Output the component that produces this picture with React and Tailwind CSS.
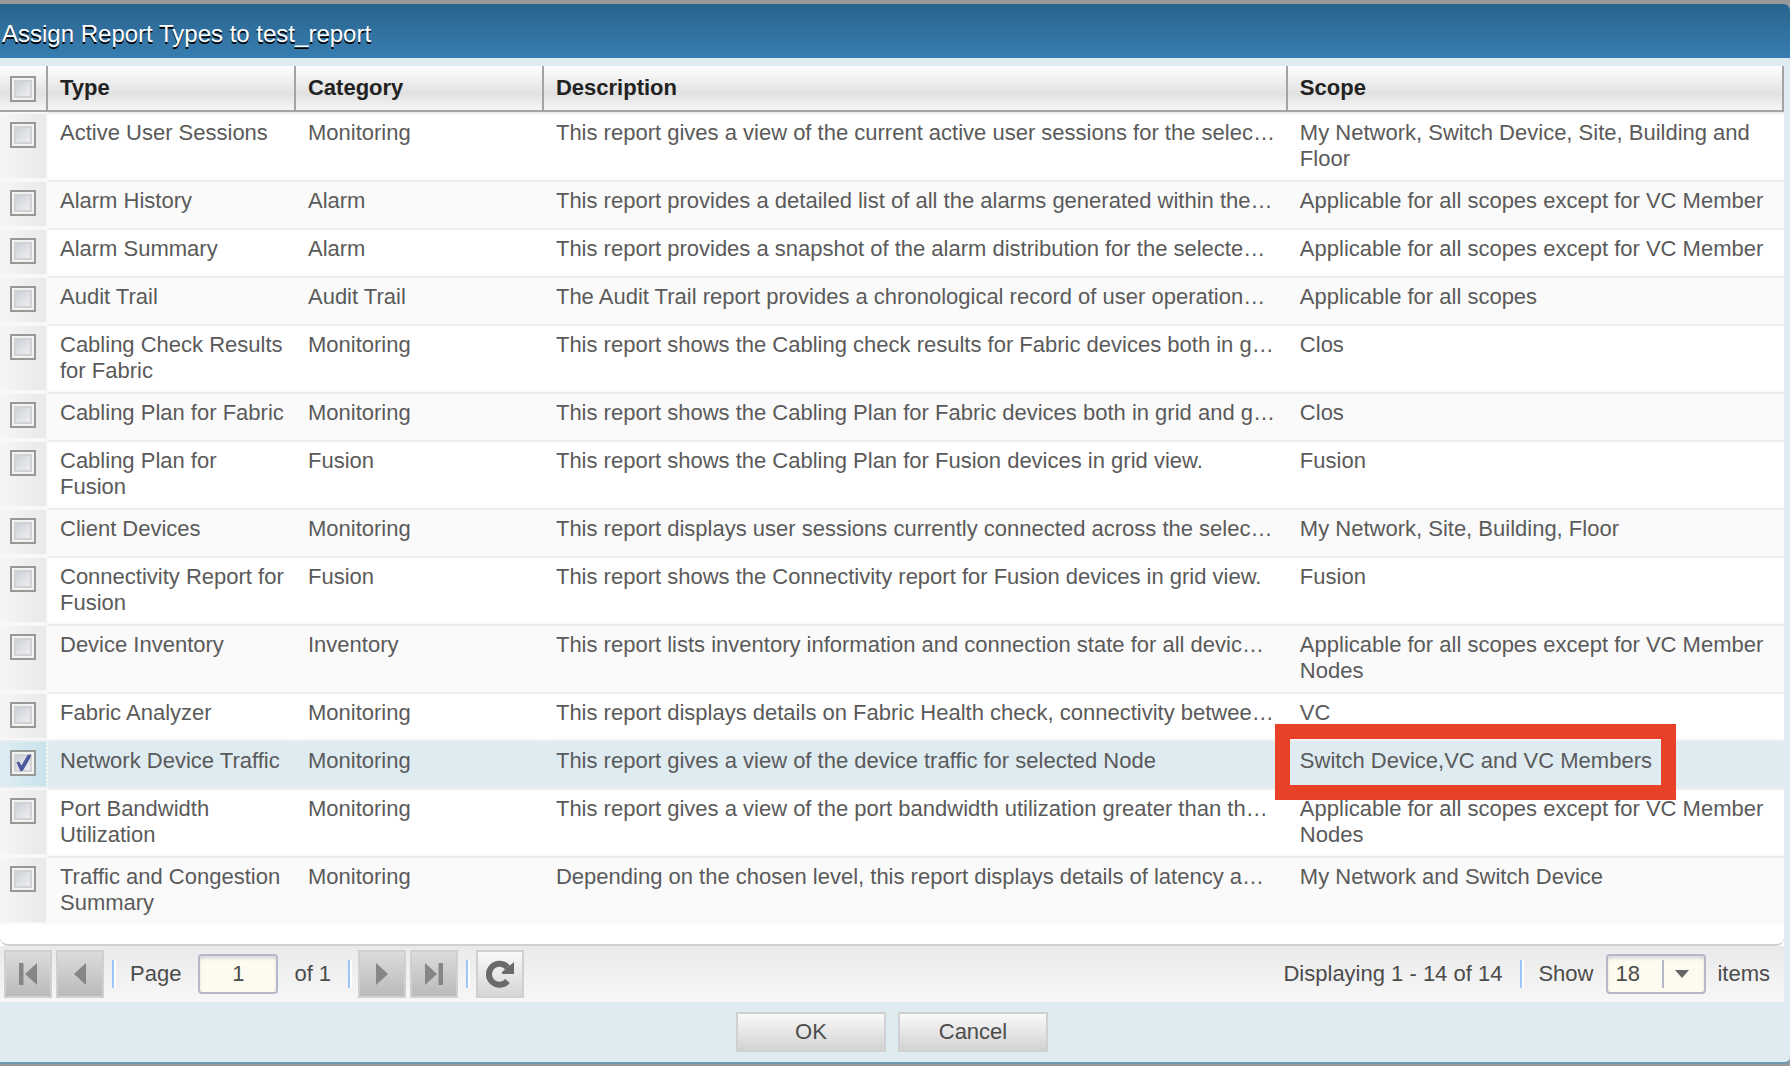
import React, { useState } from "react";

const reports = [
  {
    type: "Active User Sessions",
    category: "Monitoring",
    description: "This report gives a view of the current active user sessions for the selec…",
    scope: "My Network, Switch Device, Site, Building and Floor",
  },
  {
    type: "Alarm History",
    category: "Alarm",
    description: "This report provides a detailed list of all the alarms generated within the…",
    scope: "Applicable for all scopes except for VC Member",
  },
  {
    type: "Alarm Summary",
    category: "Alarm",
    description: "This report provides a snapshot of the alarm distribution for the selecte…",
    scope: "Applicable for all scopes except for VC Member",
  },
  {
    type: "Audit Trail",
    category: "Audit Trail",
    description: "The Audit Trail report provides a chronological record of user operation…",
    scope: "Applicable for all scopes",
  },
  {
    type: "Cabling Check Results for Fabric",
    category: "Monitoring",
    description: "This report shows the Cabling check results for Fabric devices both in g…",
    scope: "Clos",
  },
  {
    type: "Cabling Plan for Fabric",
    category: "Monitoring",
    description: "This report shows the Cabling Plan for Fabric devices both in grid and g…",
    scope: "Clos",
  },
  {
    type: "Cabling Plan for Fusion",
    category: "Fusion",
    description: "This report shows the Cabling Plan for Fusion devices in grid view.",
    scope: "Fusion",
  },
  {
    type: "Client Devices",
    category: "Monitoring",
    description: "This report displays user sessions currently connected across the selec…",
    scope: "My Network, Site, Building, Floor",
  },
  {
    type: "Connectivity Report for Fusion",
    category: "Fusion",
    description: "This report shows the Connectivity report for Fusion devices in grid view.",
    scope: "Fusion",
  },
  {
    type: "Device Inventory",
    category: "Inventory",
    description: "This report lists inventory information and connection state for all devic…",
    scope: "Applicable for all scopes except for VC Member Nodes",
  },
  {
    type: "Fabric Analyzer",
    category: "Monitoring",
    description: "This report displays details on Fabric Health check, connectivity betwee…",
    scope: "VC",
  },
  {
    type: "Network Device Traffic",
    category: "Monitoring",
    description: "This report gives a view of the device traffic for selected Node",
    scope: "Switch Device,VC and VC Members",
    highlight: true,
  },
  {
    type: "Port Bandwidth Utilization",
    category: "Monitoring",
    description: "This report gives a view of the port bandwidth utilization greater than th…",
    scope: "Applicable for all scopes except for VC Member Nodes",
  },
  {
    type: "Traffic and Congestion Summary",
    category: "Monitoring",
    description: "Depending on the chosen level, this report displays details of latency a…",
    scope: "My Network and Switch Device",
  },
];

const CheckBox = ({ label, checked, onChange }) => (
  <label className="relative block size-[26px]">
    <input
      type="checkbox"
      aria-label={label}
      checked={checked}
      onChange={onChange}
      className="block size-[26px] appearance-none border-2 border-[#979997] bg-linear-to-br from-[#c4c8d0] to-[#f8f8f8] shadow-[inset_0_0_0_2px_#f2f2f2,inset_0_0_0_4px_#d0d2d6]"
    />
    {checked && (
      <svg viewBox="0 0 26 26" className="pointer-events-none absolute inset-0" fill="#4a5a9c">
        <path d="M6.500 12.500 L9 11.500 L11.500 15.500 L17.500 5 L21 4.500 L20.500 7.500 L13 20.500 L10.500 21.500 Z" />
      </svg>
    )}
  </label>
);

const Separator = () => (
  <div className="h-7 w-1 border-l-2 border-[#9dc6fb] bg-white"></div>
);

const PageButton = ({ label, children }) => (
  <button
    aria-label={label}
    className="flex size-12 items-center justify-center border-2 border-[#d0d0d0] bg-linear-to-b from-[#dcdcdc] to-[#bababa]"
  >
    <svg viewBox="0 0 24 24" className="size-6" fill="#868686">
      {children}
    </svg>
  </button>
);

const headCell = "h-[46px] border-r-2 border-b-2 border-[#a3a3a3] p-0 pl-3 text-left font-bold text-[#222]";

const App = () => {
  const [selected, setSelected] = useState(["Network Device Traffic"]);
  const [page, setPage] = useState("1");

  const toggle = (type) =>
    setSelected(selected.includes(type) ? selected.filter((t) => t !== type) : [...selected, type]);

  const toggleAll = () =>
    setSelected(selected.length === reports.length ? [] : reports.map((r) => r.type));

  return (
    <div className="bg-[#999] pt-1 pb-0.5 font-['Liberation_Sans',Arial,sans-serif] text-[22px] leading-[26px] text-[#4c4c4c]">
      <div className="overflow-hidden rounded-r-md border-b-2 border-[#6c9ab5] bg-[#deebf1]">
        <h1 className="bg-linear-to-b from-[#2a648d] to-[#377db1] px-0.5 pt-[17px] pb-[11px] text-[24px] text-white [text-shadow:0_2px_0_#000]">
          Assign Report Types to test_report
        </h1>

        <div className="pt-2 pr-1.5">
          <div className="bg-white">
            <div className="rounded-b-lg border-b-2 border-[#d0d0d0] pb-5">
              <table className="w-full table-fixed border-separate border-spacing-0">
                <colgroup>
                  <col className="w-12" />
                  <col className="w-[13.9%]" />
                  <col className="w-[13.9%]" />
                  <col className="w-[41.7%]" />
                  <col />
                </colgroup>
                <thead>
                  <tr className="bg-linear-to-b from-white via-[#e1e1e1] via-60% to-[#f9f9f9]">
                    <th className="h-[46px] border-r-2 border-b-2 border-[#a3a3a3] p-0 pt-0.5 pl-[10px]">
                      <CheckBox label="Select all" checked={selected.length === reports.length} onChange={toggleAll} />
                    </th>
                    <th className={headCell}>Type</th>
                    <th className={headCell}>Category</th>
                    <th className={headCell}>Description</th>
                    <th className={headCell}>Scope</th>
                  </tr>
                </thead>
                <tbody>
                  {reports.map((report, i) => {
                    const isSelected = selected.includes(report.type);
                    const cell = isSelected
                      ? "border-y-2 border-dotted border-[#ededed] px-3 py-1.5"
                      : "border-y-2 border-t-[#ededed] border-b-[#fafafa] px-3 py-1.5";
                    return (
                      <tr
                        key={report.type}
                        className={`h-12 align-top text-[#5a5a5a] ${
                          isSelected ? "bg-[#deebf1]" : i % 2 ? "bg-[#fafafa]" : "bg-white"
                        }`}
                      >
                        <td
                          className={`border-y-2 border-r-2 border-[#f8f8f8] bg-clip-padding pt-2 pl-[10px] ${
                            isSelected
                              ? "border-y-[#ededed] border-dotted bg-linear-to-r from-[#dfedf3] to-[#c9e2ec]"
                              : "bg-linear-to-r from-[#f6f6f6] to-[#e9e9e9]"
                          }`}
                        >
                          <CheckBox label={report.type} checked={isSelected} onChange={() => toggle(report.type)} />
                        </td>
                        <td className={cell}>{report.type}</td>
                        <td className={cell}>{report.category}</td>
                        <td className={cell}>
                          <div className="truncate">{report.description}</div>
                        </td>
                        <td className={report.highlight ? `relative z-10 ${cell}` : cell}>
                          {report.scope}
                          {report.highlight && (
                            <div className="pointer-events-none absolute -top-[18px] -left-[13px] h-[76px] w-[401px] border-[15px] border-[#e94127]"></div>
                          )}
                        </td>
                      </tr>
                    );
                  })}
                </tbody>
              </table>
            </div>

            <div className="flex items-center justify-between bg-linear-to-b from-[#eaeaea] to-[#f7f7f7] py-1 pr-[14px] pl-1">
              <div className="flex items-center">
                <div className="flex gap-1">
                  <PageButton label="First page">
                    <path d="M3 1h4.500v22H3zM21 1v22L9 12z" />
                  </PageButton>
                  <PageButton label="Previous page">
                    <path d="M18 1v22L6 12z" />
                  </PageButton>
                </div>
                <div className="mr-1.5 ml-2 flex items-center">
                  <Separator />
                  <label htmlFor="page" className="pr-[17px] pl-[14px]">Page</label>
                  <input
                    id="page"
                    value={page}
                    onChange={(e) => setPage(e.target.value)}
                    className="h-10 w-20 rounded-sm border-2 border-[#b5b8c8] bg-[#fdfbef] text-center shadow-[inset_0_3px_3px_#ddd]"
                  />
                  <span className="pr-[17px] pl-4">of 1</span>
                  <Separator />
                </div>
                <div className="flex gap-1">
                  <PageButton label="Next page">
                    <path d="M6 1v22L18 12z" />
                  </PageButton>
                  <PageButton label="Last page">
                    <path d="M3 1v22L15 12zM16.500 1H21v22h-4.500z" />
                  </PageButton>
                </div>
                <div className="mr-1.5 ml-2">
                  <Separator />
                </div>
                <button
                  aria-label="Refresh"
                  className="flex size-12 items-center justify-center border-2 border-[#d0d0d0] bg-linear-to-b from-[#f9f9f9] to-[#d6d6d6]"
                >
                  <svg viewBox="0 0 28 28" className="size-7">
                    <path d="M21.500 7.500 A10.500 10.500 0 1 0 21.500 21" fill="none" stroke="#6a6a6a" strokeWidth="6" />
                    <path d="M28 2v12H16v-2z" fill="#6a6a6a" />
                  </svg>
                </button>
              </div>

              <div className="flex items-center">
                <span className="pr-[18px]">Displaying 1 - 14 of 14</span>
                <Separator />
                <label htmlFor="size" className="pr-[13px] pl-[14px]">Show</label>
                <div className="relative mr-[11px]">
                  <select
                    id="size"
                    defaultValue="18"
                    className="block h-10 w-[100px] appearance-none rounded-sm border-2 border-[#b5b8c8] bg-[#fdfbef] pl-[7px] shadow-[inset_0_3px_3px_#ddd]"
                  >
                    <option>18</option>
                    <option>36</option>
                  </select>
                  <div className="pointer-events-none absolute inset-y-1.5 right-0 flex w-11 items-center border-l-2 border-[#b5b8c8] pl-[11px]">
                    <svg viewBox="0 0 14 8" className="h-2 w-[14px]" fill="#666">
                      <path d="M0 0h14L7 8z" />
                    </svg>
                  </div>
                </div>
                <span>items</span>
              </div>
            </div>
          </div>

          <div className="flex justify-center gap-3 py-[10px]">
            <button className="h-10 w-[150px] border-2 border-[#d0d0d0] bg-linear-to-b from-[#f9f9f9] to-[#d3d3d3]">
              OK
            </button>
            <button className="h-10 w-[150px] border-2 border-[#d0d0d0] bg-linear-to-b from-[#f9f9f9] to-[#d3d3d3]">
              Cancel
            </button>
          </div>
        </div>
      </div>
    </div>
  );
};

export default App;
